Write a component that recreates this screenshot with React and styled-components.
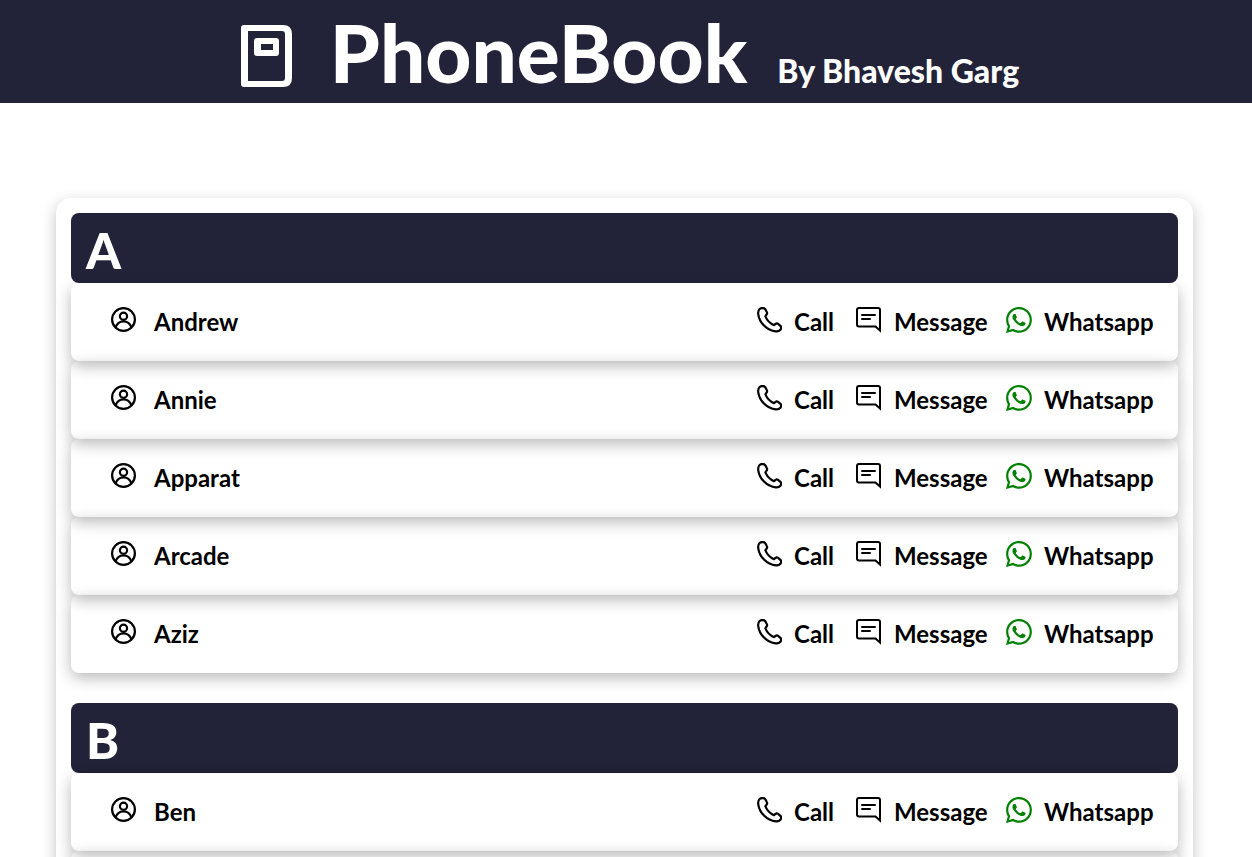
import React from "react";
import styled, { createGlobalStyle } from "styled-components";
import { BsWhatsapp } from "react-icons/bs";

const navy = "#222239";

const GlobalStyle = createGlobalStyle`
  * { box-sizing: border-box; }
  body {
    margin: 0;
    background: #fff;
    color: #000;
    font-family: Lato, "Liberation Sans", sans-serif;
  }
`;

const TopBar = styled.header`
  display: flex;
  justify-content: center;
  align-items: flex-start;
  padding: 4px 0 3px;
  background: ${navy};
  color: #fff;
`;

const Logo = styled.svg`
  flex: none;
  width: 51px;
  height: 62px;
  margin: 21px 38px 0 8px;
`;

const Titles = styled.div`
  display: flex;
  align-items: baseline;
  gap: 30px;
`;

const Title = styled.h1`
  margin: 0;
  font-size: 80px;
  line-height: 96px;
  font-weight: 900;
`;

const Author = styled.p`
  margin: 0;
  font-size: 32px;
  font-weight: 900;
`;

const Page = styled.main`
  padding: 95px 59px 40px 56px;
`;

const Book = styled.div`
  display: flex;
  flex-direction: column;
  gap: 30px;
  padding: 15px;
  border-radius: 15px;
  box-shadow: 0 5px 15px rgba(0, 0, 0, 0.24);
`;

const Letter = styled.h2`
  height: 70px;
  margin: 0;
  padding: 7px 15px 0;
  border-radius: 8px;
  background: ${navy};
  color: #fff;
  font-size: 50px;
  line-height: 60px;
  font-weight: 900;
`;

const Contacts = styled.ul`
  margin: 0;
  padding: 0;
  list-style: none;
`;

const Row = styled.li`
  display: flex;
  justify-content: space-between;
  min-height: 78px;
  padding: 24px 23px 24px 40px;
  border-radius: 8px;
  box-shadow: 0 5px 15px rgba(0, 0, 0, 0.28);
`;

const Entry = styled.span`
  display: flex;
  align-items: flex-start;
  gap: ${(p) => p.$gap}px;
  font-size: 24px;
  line-height: 30px;
  font-weight: 700;
  white-space: nowrap;

  svg {
    flex: none;
    width: 26px;
    height: 26px;
    color: ${(p) => p.$iconColor || "#000"};
  }
`;

const Action = styled(Entry).attrs({ as: "a", $gap: 12 })`
  color: inherit;
  text-decoration: none;
`;

const Actions = styled.nav`
  display: grid;
  grid-template-columns: 80px 130px 149px;
  gap: 20px;
`;

const BookIcon = () => (
  <Logo viewBox="0 0 51 62" fill="#fff" fillRule="evenodd" aria-hidden="true">
    <path d="M3 0H42Q51 0 51 9V53Q51 62 42 62H3Q0 62 0 59V3Q0 0 3 0ZM7 6V56H41Q44 56 44 53V9Q44 6 41 6Z" />
    <path d="M16 13H35Q38 13 38 16V28Q38 31 35 31H16Q13 31 13 28V16Q13 13 16 13ZM20 19V25H32V19Z" />
  </Logo>
);

const PersonIcon = () => (
  <svg viewBox="0 0 26 26" fill="none" stroke="currentColor" strokeWidth="2.2" aria-hidden="true">
    <circle cx="12.5" cy="12.5" r="11.4" />
    <circle cx="12.5" cy="9.2" r="3.6" />
    <path d="M4.5 20.5C7.5 12.3 17.5 12.3 20.5 20.5" />
  </svg>
);

const PhoneIcon = () => (
  <svg viewBox="-1 0 26 26" fill="none" stroke="currentColor" strokeWidth="2.2" strokeLinejoin="round" aria-hidden="true">
    <path d="M2.6 2C1.4 3.2 1 4.8 1.2 6.8C2.2 15.6 9.8 23.6 18.8 24.4C20.8 24.6 22.4 24 23.4 22.8C24.4 21.4 24.3 19.8 23.4 18.9L20.8 16.7Q19.7 15.9 18.6 16.8L17 18.2C13.2 16.6 10 13.2 8.4 9.4L9.7 7.4Q10.5 6.2 9.8 5L8.2 2.1Q7.4 1.1 6 1.1H5Q3.6 1.1 2.6 2Z" />
  </svg>
);

const MessageIcon = () => (
  <svg viewBox="0 0 26 26" fill="none" stroke="currentColor" strokeWidth="2" aria-hidden="true">
    <path d="M3 1H22Q24 1 24 3V23.5L19.5 19.5H3Q1 19.5 1 17.5V3Q1 1 3 1Z" />
    <path d="M6 8H19M6 12H14" strokeLinecap="round" />
  </svg>
);

const groups = [
  { letter: "A", names: ["Andrew", "Annie", "Apparat", "Arcade", "Aziz"] },
  { letter: "B", names: ["Ben", ""] },
];

const Contact = ({ name }) =>
  name ? (
    <Row>
      <Entry $gap={17}>
        <PersonIcon />
        {name}
      </Entry>
      <Actions>
        <Action href="#call">
          <PhoneIcon />
          Call
        </Action>
        <Action href="#message">
          <MessageIcon />
          Message
        </Action>
        <Action href="#whatsapp" $iconColor="green">
          <BsWhatsapp aria-hidden="true" />
          Whatsapp
        </Action>
      </Actions>
    </Row>
  ) : (
    <Row aria-hidden="true" />
  );

export default function App() {
  return (
    <>
      <GlobalStyle />
      <TopBar>
        <BookIcon />
        <Titles>
          <Title>PhoneBook</Title>
          <Author>By Bhavesh Garg</Author>
        </Titles>
      </TopBar>
      <Page>
        <Book>
          {groups.map(({ letter, names }) => (
            <section key={letter}>
              <Letter>{letter}</Letter>
              <Contacts>
                {names.map((name) => (
                  <Contact key={name} name={name} />
                ))}
              </Contacts>
            </section>
          ))}
        </Book>
      </Page>
    </>
  );
}
